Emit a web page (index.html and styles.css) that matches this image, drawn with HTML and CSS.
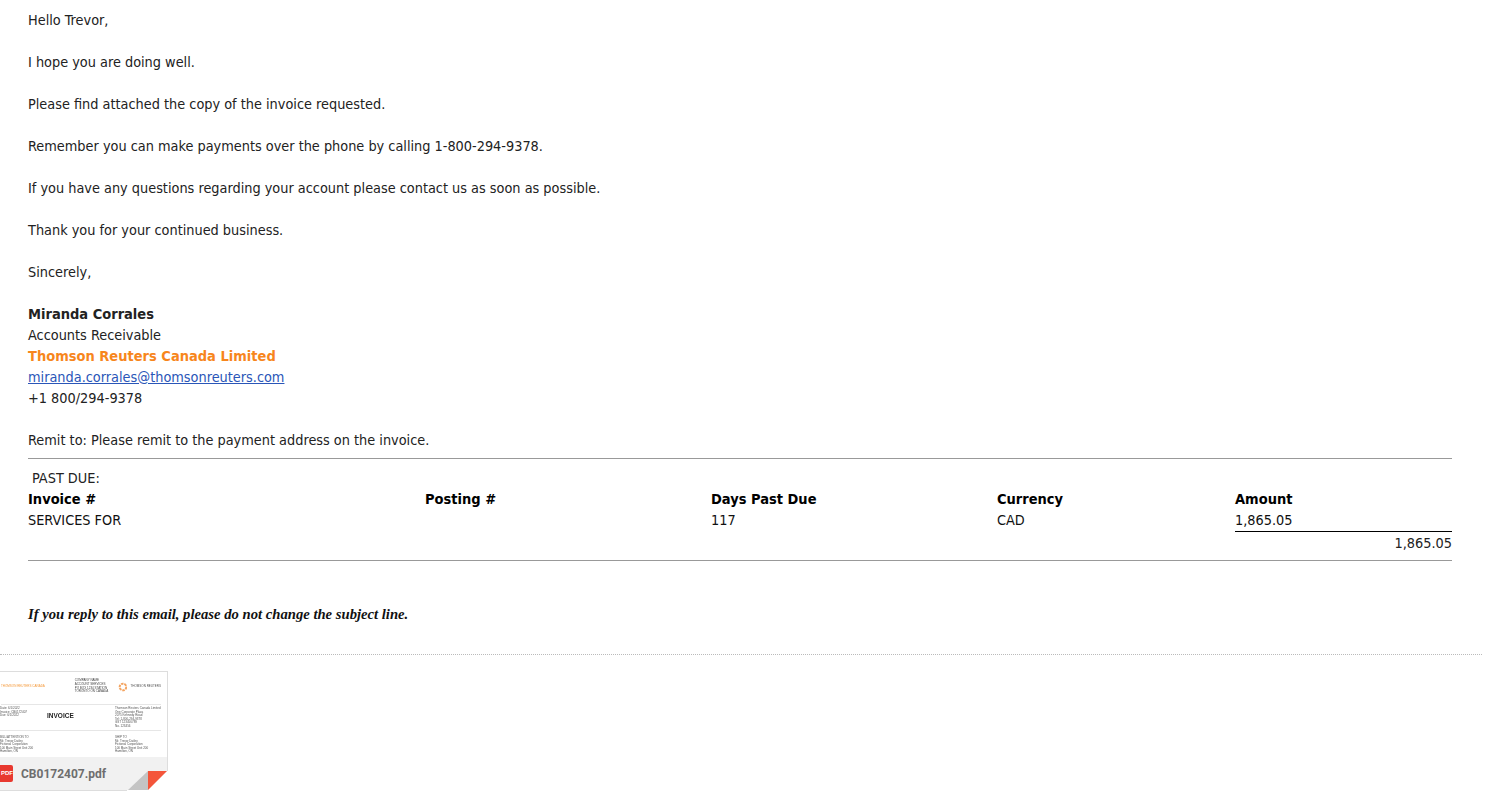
FILE: index.html
```html
<!DOCTYPE html>
<html lang="en">
<head>
<meta charset="utf-8">
<title>Invoice email</title>
<link rel="stylesheet" href="styles.css">
</head>
<body>
<main class="message">
  <p>Hello Trevor,</p>
  <p>I hope you are doing well.</p>
  <p>Please find attached the copy of the invoice requested.</p>
  <p>Remember you can make payments over the phone by calling 1-800-294-9378.</p>
  <p>If you have any questions regarding your account please contact us as soon as possible.</p>
  <p>Thank you for your continued business.</p>
  <p>Sincerely,</p>
  <p>
    <strong>Miranda Corrales</strong><br>
    Accounts Receivable<br>
    <strong class="company">Thomson Reuters Canada Limited</strong><br>
    <a href="#">miranda.corrales@thomsonreuters.com</a><br>
    +1 800/294-9378
  </p>
  <p class="remit">Remit to: Please remit to the payment address on the invoice.</p>
  <section class="invoice">
    <div class="past-due">PAST DUE:</div>
    <div class="grid">
      <strong>Invoice #</strong><strong>Posting #</strong><strong>Days Past Due</strong><strong>Currency</strong><strong>Amount</strong>
      <span>SERVICES FOR</span><span></span><span>117</span><span>CAD</span><span class="amount">1,865.05</span>
    </div>
    <div class="total">1,865.05</div>
  </section>
  <p class="note">If you reply to this email, please do not change the subject line.</p>
</main>
<div class="attachments">
  <div class="thumb">
    <div class="doc">
      <div class="doc-head">
        <span class="tiny orange">THOMSON REUTERS CANADA</span>
        <span class="tiny addr">COMPANY NAME<br>ACCOUNT SERVICES<br>PO BOX 1234 STATION<br>TORONTO ON CANADA</span>
        <svg class="tr-logo" viewBox="0 0 12 12" aria-hidden="true"><circle cx="6" cy="6" r="4" fill="none" stroke="#f4a460" stroke-width="2.4" stroke-dasharray="3 1"/></svg>
        <span class="tiny tr-name">THOMSON REUTERS</span>
      </div>
      <div class="doc-mid">
        <span class="tiny meta">Date: 6/1/2022<br>Invoice: CB0172407<br>Due: 6/1/2022</span>
        <span class="doc-title">INVOICE</span>
        <span class="tiny meta">Thomson Reuters Canada Limited<br>One Corporate Plaza<br>2075 Kennedy Road<br>Tel: 1-800-294-9378<br>GST 123456789<br>No. 123456</span>
      </div>
      <div class="doc-bottom">
        <span class="tiny meta">BILL/ATTENTION TO<br>Mr. Trevor Dailey<br>Fictional Corporation<br>100 Main Street Unit 200<br>Hamilton, ON</span>
        <span class="tiny meta">SHIP TO<br>Mr. Trevor Dailey<br>Fictional Corporation<br>100 Main Street Unit 200<br>Hamilton, ON</span>
      </div>
    </div>
    <div class="file-bar">
      <span class="pdf">PDF</span>
      <span class="file-name">CB0172407.pdf</span>
    </div>
    <svg class="corner" viewBox="0 0 41 21" aria-hidden="true">
      <polygon points="21,20 40,1 41,1 41,21 0,21 0,20" fill="#fff"/>
      <polygon points="1,20 21,1 21,20" fill="#c4c4c4"/>
      <polygon points="21,1 40,1 21,20" fill="#f4553a"/>
    </svg>
  </div>
</div>
</body>
</html>
```
FILE: styles.css
```css
html, body { margin: 0; padding: 0; background: #fff; }
body {
  font-family: "DejaVu Sans", "Noto Sans", sans-serif;
  font-stretch: condensed;
  font-size: 14.35px;
  line-height: 21px;
  color: #222;
  height: 804px;
  overflow: hidden;
}
.message { padding: 10px 33px 0 28px; }
strong { font-size: 14.5px; }
p { margin: 0 0 21px; }
a { color: #2a56b8; }
.company { color: #f7861c; }
.remit { margin: 0 0 7px; }
.invoice { border-top: 1px solid #999; border-bottom: 1px solid #999; padding: 9px 0 7px; }
.past-due { padding-left: 4px; }
.grid { display: grid; grid-template-columns: 397px 286px 286px 238px 217px; color: #111; }
.grid strong { color: #000; }
.amount { border-bottom: 1px solid #000; height: 21px; }
.total { text-align: right; padding-top: 1px; height: 20px; }
.note {
  margin: 43px 0 0;
  font-family: "Liberation Serif", serif;
  font-stretch: normal;
  font-weight: bold;
  font-style: italic;
  font-size: 14.67px;
  color: #111;
}
.attachments { margin-top: 29px; border-top: 1px dotted #bbb; width: 1482px; padding-top: 16px; }
.thumb {
  position: relative;
  width: 168px;
  height: 120px;
  box-sizing: border-box;
  border: 1px solid #ddd;
  border-left: 0;
  display: flex;
  flex-direction: column;
  font-stretch: normal;
}
.doc { flex: 1; min-height: 0; overflow: hidden; color: #555; padding: 0 3px 0 0; filter: blur(0.25px); font-family: "Liberation Sans", sans-serif; }
.tiny { font-size: 3px; line-height: 3.6px; display: block; }
.doc-head { display: flex; align-items: center; height: 33px; box-sizing: border-box; padding-bottom: 3px; margin: 0 3px 0 1px; border-bottom: 1px solid #e6e6e6; }
.orange { color: #f59a3c; width: 74px; white-space: nowrap; }
.addr { width: 43px; color: #444; white-space: nowrap; }
.tr-logo { width: 10px; height: 10px; margin-right: 3px; }
.tr-name { white-space: nowrap; }
.doc-mid { display: flex; align-items: flex-start; height: 26px; padding-top: 2px; box-sizing: border-box; margin: 0 3px 0 0; border-bottom: 1px solid #e6e6e6; }
.meta { white-space: nowrap; }
.doc-mid .meta:first-child { width: 47px; }
.doc-title { width: 68px; margin-top: 5px; font-family: "Liberation Sans", sans-serif; font-size: 6.5px; font-weight: bold; color: #222; line-height: 8px; }
.doc-bottom { display: flex; padding-top: 5px; }
.doc-bottom .meta:first-child { width: 115px; }
.file-bar {
  height: 33px;
  flex: none;
  background: #f1f1f1;
  display: flex;
  align-items: center;
  gap: 8px;
}
.pdf {
  width: 13px;
  height: 17px;
  background: #e8392f;
  color: #fff;
  font: bold 6px/17px "Liberation Sans", sans-serif;
  border-radius: 0 2px 2px 0;
  overflow: hidden;
  text-align: right;
}
.file-name { font: bold 12px/16px Roboto, sans-serif; color: #6e6e6e; }
.corner { position: absolute; right: -1px; bottom: -1px; width: 41px; height: 21px; }
```
